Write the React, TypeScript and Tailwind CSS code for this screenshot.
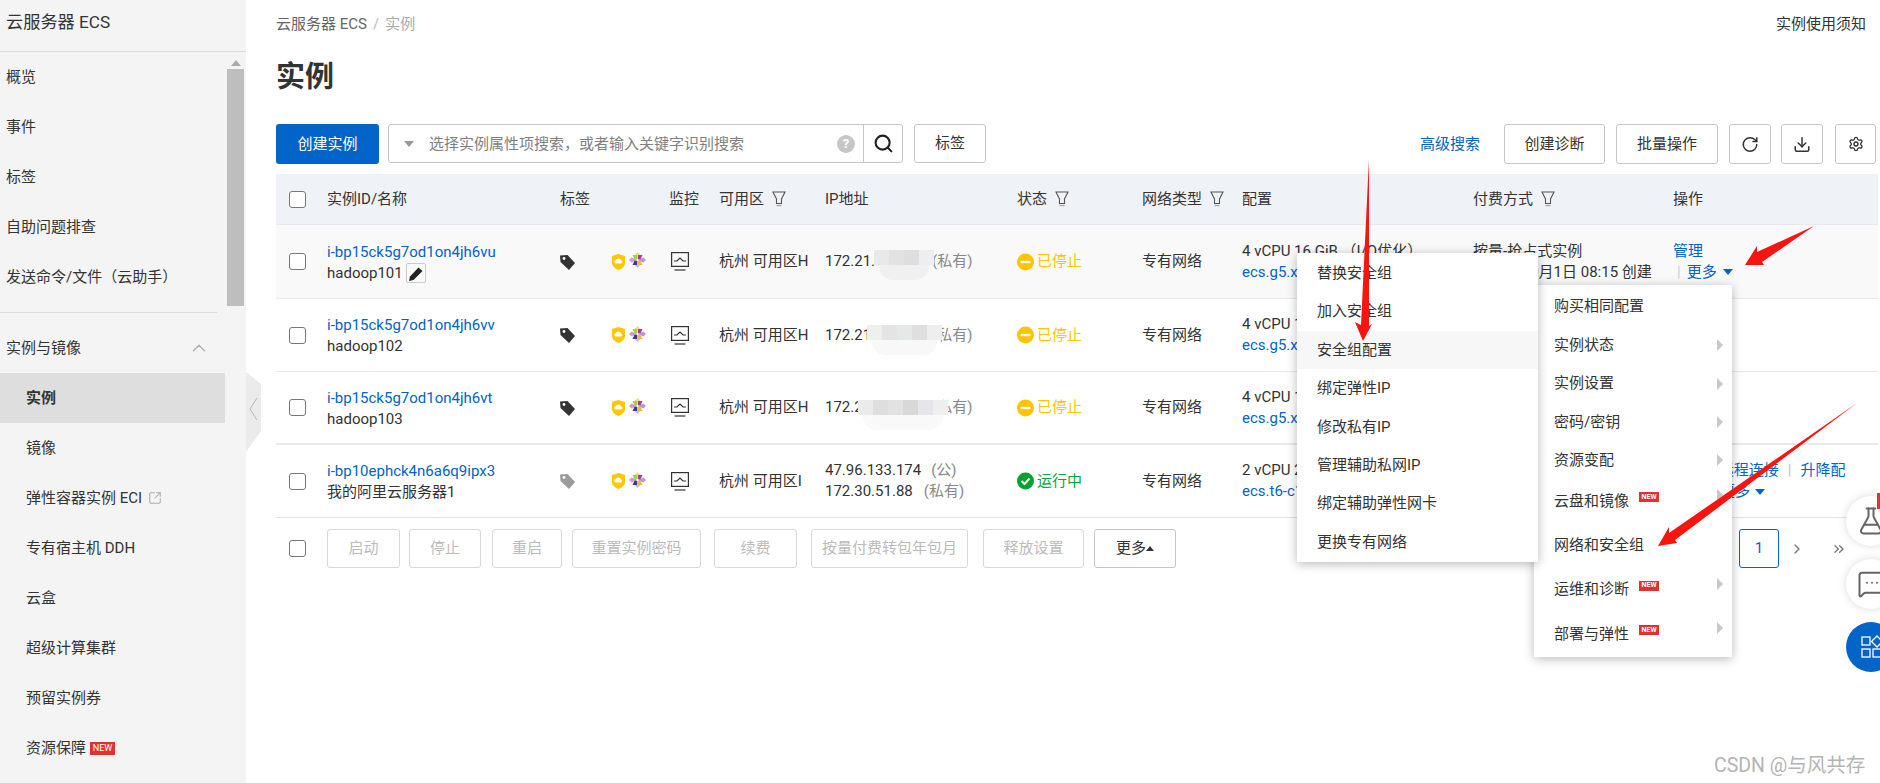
import {
  ChevronUp,
  ChevronRight,
  ChevronsRight,
  Search,
  RotateCw,
  Download,
  Settings,
  FlaskConical,
  MessageSquareMore,
  SquareArrowOutUpRight,
} from "lucide-react";

const topNav = ["概览", "事件", "标签", "自助问题排查", "发送命令/文件（云助手）"];
const subNav = ["实例", "镜像", "弹性容器实例 ECI", "专有宿主机 DDH", "云盒", "超级计算集群", "预留实例券", "资源保障"];

const securityMenu = ["替换安全组", "加入安全组", "安全组配置", "绑定弹性IP", "修改私有IP", "管理辅助私网IP", "绑定辅助弹性网卡", "更换专有网络"];
const moreMenu = [
  { label: "购买相同配置", h: "h-[40px]" },
  { label: "实例状态", arrow: true, h: "h-[38px]" },
  { label: "实例设置", arrow: true, h: "h-[39px]" },
  { label: "密码/密钥", arrow: true, h: "h-[38px]" },
  { label: "资源变配", arrow: true, h: "h-[38px]" },
  { label: "云盘和镜像", isNew: true, arrow: true, up: true, h: "h-[44px]" },
  { label: "网络和安全组", h: "h-[44px]" },
  { label: "运维和诊断", isNew: true, arrow: true, up: true, h: "h-[45px]" },
  { label: "部署与弹性", isNew: true, arrow: true, up: true, h: "h-[44px]" },
];

const footerButtons = [
  { label: "启动", w: "w-[73px]" },
  { label: "停止", w: "w-[72px] ml-[9px]" },
  { label: "重启", w: "w-[70px] ml-[11px]" },
  { label: "重置实例密码", w: "w-[129px] ml-[10px]" },
  { label: "续费", w: "w-[83px] ml-[13px]" },
  { label: "按量付费转包年包月", w: "w-[157px] ml-[14px]" },
  { label: "释放设置", w: "w-[101px] ml-[15px]" },
];

const rows = [
  {
    id: "i-bp15ck5g7od1on4jh6vu",
    name: "hadoop101",
    az: "杭州 可用区H",
    ip: "172.21.1",
    cfg: "4 vCPU 16 GiB （I/O优化）",
    type: "ecs.g5.xlarge",
    status: "stopped",
    h: "h-[74px]",
    bg: "bg-[#f9f9f9]",
    mosaic: { left: "left-[49px]", top: "top-[25px]", colors: ["#e9e9e9", "#e2e2e2", "#dedede", "#eeeef2"], low: "#f0f0f0" },
  },
  {
    id: "i-bp15ck5g7od1on4jh6vv",
    name: "hadoop102",
    az: "杭州 可用区H",
    ip: "172.21",
    cfg: "4 vCPU 16 GiB （I/O优化）",
    type: "ecs.g5.xlarge",
    status: "stopped",
    h: "h-[73px]",
    bg: "bg-white",
    mosaic: { left: "left-[42px]", top: "top-[26px]", colors: ["#efefef", "#e4e4e4", "#e6e8e8", "#dfdfdf", "#eeeeee"], low: "#f8f8f8" },
  },
  {
    id: "i-bp15ck5g7od1on4jh6vt",
    name: "hadoop103",
    az: "杭州 可用区H",
    ip: "172.2",
    cfg: "4 vCPU 16 GiB （I/O优化）",
    type: "ecs.g5.xlarge",
    status: "stopped",
    h: "h-[73px]",
    bg: "bg-white",
    mosaic: { left: "left-[33px]", top: "top-[28px]", colors: ["#ebebeb", "#dedede", "#e2e2e2", "#d8d8d8", "#e6e6ea", "#eeeeee"], low: "#f9f9f9" },
  },
  {
    id: "i-bp10ephck4n6a6q9ipx3",
    name: "我的阿里云服务器1",
    az: "杭州 可用区I",
    ip: "",
    cfg: "2 vCPU 2 GiB",
    type: "ecs.t6-c1m1.large",
    status: "running",
    h: "h-[73px]",
    bg: "bg-white",
    mosaic: null,
  },
];

const gridCols = "grid grid-cols-[51px_233px_109px_50px_106px_192px_125px_100px_231px_200px_1fr]";

function Checkbox() {
  return <span className="block w-[17px] h-[17px] rounded-[3px] border border-[#777] bg-white" />;
}

function FilterIcon() {
  return (
    <svg width="14" height="16" viewBox="0 0 14 16" className="ml-[8px] shrink-0" fill="none">
      <path d="M1 1h12L9.5 8v4.5h-5V8z" stroke="#555" strokeWidth="1.1" />
      <path d="M4.5 14.5h5" stroke="#aaa" strokeWidth="1.4" />
    </svg>
  );
}

function TagIcon({ color }: { color: string }) {
  return (
    <svg width="15" height="16" viewBox="0 0 15 16">
      <path d="M0 1.5 7.5 1 15 9l-6 7-8.500-8z" fill={color} />
      <circle cx="4" cy="4.500" r="1.400" fill="#fff" />
    </svg>
  );
}

function ShieldIcon() {
  return (
    <svg width="13" height="16" viewBox="0 0 13 16">
      <path d="M6.500 0 13 2v7c0 3.500-3.500 5.800-6.500 7C3.500 14.800 0 12.500 0 9V2z" fill="#ffc700" />
      <path d="M3.500 9.500a1.700 1.700 0 0 1 .2-3.300 2.800 2.800 0 0 1 5.300.2 1.600 1.600 0 0 1 0 3.100z" fill="#fff" />
    </svg>
  );
}

function CentosIcon() {
  return (
    <svg width="17" height="16" viewBox="0 0 17 16">
      <path d="M8.500 0 11 2.500 9 7H8L6 2.500z" fill="#e3dc8e" />
      <path d="M8.500 16 6 13.500 8 9h1l2 4.500z" fill="#cbb8dc" />
      <path d="M0 8 2.500 5.500 7.500 7.500v1L2.500 10.500z" fill="#d79ac8" />
      <path d="M17 8 14.500 5.500 9.500 7.500v1l5 2z" fill="#b49bd2" />
      <path d="M3.500 3H8v4.300H5.500z" fill="#a6d042" />
      <path d="M9 3h4.500l-2 4.300H9z" fill="#a93c8e" />
      <path d="M3.500 13H8V8.700H5.500z" fill="#3a3a94" />
      <path d="M9 13h4.500l-2-4.300H9z" fill="#f3b73a" />
    </svg>
  );
}

function MonitorIcon() {
  return (
    <svg width="18" height="19" viewBox="0 0 18 19" fill="none">
      <rect x="0.600" y="0.600" width="16.800" height="13.800" stroke="#333" strokeWidth="1.200" />
      <path d="M3 9h3l3-3 3 3h3" stroke="#333" strokeWidth="1.200" />
      <path d="M3.500 18h11" stroke="#333" strokeWidth="1.200" />
    </svg>
  );
}

function Mosaic({ m }: { m: NonNullable<(typeof rows)[number]["mosaic"]> }) {
  return (
    <div className={`absolute flex flex-col ${m.left} ${m.top}`}>
      <div className="flex">
        {m.colors.map((c, i) => (
          <span key={i} className="w-[15px] h-[15px]" style={{ backgroundColor: c }} />
        ))}
      </div>
      <div className="h-[15px] mx-[5px] rounded-b-[14px]" style={{ backgroundColor: m.low }} />
    </div>
  );
}

function NewBadge({ size }: { size: "lg" | "sm" }) {
  return (
    <span
      className={
        size === "lg"
          ? "inline-flex items-center justify-center w-[25px] h-[13px] bg-[#e0322f] text-white text-[9px] leading-none"
          : "inline-flex items-center justify-center w-[20px] h-[10px] bg-[#e0322f] text-white text-[7px] font-bold leading-none"
      }
    >
      NEW
    </span>
  );
}

function StatusCell({ status }: { status: string }) {
  if (status === "running") {
    return (
      <div className="flex items-center gap-[3px] text-[#00a73c]">
        <svg width="17" height="18" viewBox="0 0 17 18">
          <circle cx="8.500" cy="9" r="8.500" fill="#00a32e" />
          <path d="M4.500 9 7.500 12 12.500 6.500" stroke="#fff" strokeWidth="2" fill="none" />
        </svg>
        运行中
      </div>
    );
  }
  return (
    <div className="flex items-center gap-[3px] text-[#fdc500]">
      <svg width="17" height="18" viewBox="0 0 17 18">
        <circle cx="8.500" cy="9" r="8.500" fill="#ffc400" />
        <rect x="3.500" y="7.800" width="10" height="2.400" fill="#fff" />
      </svg>
      已停止
    </div>
  );
}

export default function App() {
  return (
    <div className="relative flex w-[1880px] h-[783px] overflow-hidden bg-white text-[#333] text-[15px] font-['Roboto','Noto_Sans_CJK_SC',sans-serif]">
      {/* sidebar */}
      <aside className="w-[246px] shrink-0 flex flex-col bg-[#f4f4f4]">
        <div className="h-[52px] shrink-0 flex items-center pl-[6px] text-[17.200px] border-b border-[#dcdcdc] pb-[5px]">
          云服务器 ECS
        </div>
        <div className="flex flex-1 min-h-0">
          <nav className="w-[225px] shrink-0 overflow-hidden">
            {topNav.map((t) => (
              <div key={t} className="h-[50px] flex items-center pl-[6px] whitespace-nowrap">
                {t}
              </div>
            ))}
            <div className="mt-[10px] mr-[8px] border-t border-[#dcdcdc]" />
            <div className="mt-[10px] h-[50px] flex items-center justify-between pl-[6px] pr-[13px]">
              实例与镜像
              <ChevronUp className="w-[26px] h-[22px] text-[#aaa]" strokeWidth={1.300} />
            </div>
            {subNav.map((t) => (
              <div
                key={t}
                className={`h-[50px] flex items-center pl-[26px] whitespace-nowrap ${t === "实例" ? "bg-[#dedede] font-bold" : ""}`}
              >
                {t}
                {t === "弹性容器实例 ECI" && (
                  <SquareArrowOutUpRight className="ml-[6px] w-[14px] h-[14px] text-[#aaa]" strokeWidth={1.800} />
                )}
                {t === "资源保障" && (
                  <span className="ml-[4px] flex">
                    <NewBadge size="lg" />
                  </span>
                )}
              </div>
            ))}
          </nav>
          <div className="flex-1 flex flex-col items-center">
            <span className="mt-[8px] mb-[3px] w-0 h-0 border-x-[5px] border-x-transparent border-b-[6px] border-b-[#aaa]" />
            <div className="w-[17px] h-[237px] bg-[#bebebe]" />
          </div>
        </div>
      </aside>

      {/* collapse handle */}
      <svg width="15" height="80" viewBox="0 0 15 80" className="absolute left-[246px] top-[372px]">
        <path d="M0 0 15 12v47L0 80z" fill="#ebebeb" />
        <path d="M11 26 4 37l7 11" stroke="#b5b5b5" strokeWidth="1" fill="none" />
      </svg>

      {/* main */}
      <main className="flex-1 min-w-0 pl-[30px] pr-[2px]">
        <div className="h-[48px] flex items-center justify-between pr-[12px]">
          <div className="flex items-center">
            <span className="text-[#666]">云服务器 ECS</span>
            <span className="mx-[6px] text-[#bbb]">/</span>
            <span className="text-[#aaa]">实例</span>
          </div>
          <span>实例使用须知</span>
        </div>
        <h1 className="h-[54px] pt-[6px] flex items-center text-[29px] font-bold mb-[22px]">实例</h1>

        <div className="h-[40px] flex items-stretch mb-[10px] pr-[2px]">
          <button className="w-[103px] rounded-[3px] bg-[#0064c8] text-white">创建实例</button>
          <div className="ml-[9px] w-[476px] h-[39px] flex items-center rounded-l-[3px] border border-[#c4c6cc] pl-[15px] pr-[8px]">
            <span className="w-0 h-0 border-x-[5px] border-x-transparent border-t-[6px] border-t-[#999]" />
            <span className="ml-[15px] flex-1 text-[#808080] pt-[1px]">选择实例属性项搜索，或者输入关键字识别搜索</span>
            <span className="w-[18px] h-[18px] rounded-full bg-[#c6c6c6] text-white font-bold text-[13px] flex items-center justify-center">
              ?
            </span>
          </div>
          <div className="w-[40px] h-[39px] -ml-px flex items-center justify-center rounded-r-[3px] border border-[#c4c6cc]">
            <Search className="w-[21px] h-[21px] text-[#222]" strokeWidth={2.400} />
          </div>
          <button className="ml-[11px] w-[72px] h-[39px] rounded-[3px] border border-[#c4c6cc]">标签</button>
          <div className="flex-1" />
          <span className="self-center text-[#0064c8] mr-[24px]">高级搜索</span>
          <button className="w-[101px] rounded-[3px] border border-[#c4c6cc]">创建诊断</button>
          <button className="ml-[11px] w-[102px] rounded-[3px] border border-[#c4c6cc]">批量操作</button>
          <button className="ml-[11px] w-[42px] rounded-[3px] border border-[#c4c6cc] flex items-center justify-center">
            <RotateCw className="w-[18px] h-[21px]" strokeWidth={2} />
          </button>
          <button className="ml-[10px] w-[42px] rounded-[3px] border border-[#c4c6cc] flex items-center justify-center">
            <Download className="w-[18px] h-[21px]" strokeWidth={2} />
          </button>
          <button className="ml-[12px] w-[41px] rounded-[3px] border border-[#c4c6cc] flex items-center justify-center">
            <Settings className="w-[16px] h-[18px]" strokeWidth={2} />
          </button>
        </div>

        {/* table head */}
        <div className={`${gridCols} h-[51px] items-center bg-[#eff2f6] border-b border-[#e5e8ec]`}>
          <div className="pl-[13px]">
            <Checkbox />
          </div>
          <div>实例ID/名称</div>
          <div>标签</div>
          <div>监控</div>
          <div className="flex items-center">可用区<FilterIcon /></div>
          <div>IP地址</div>
          <div className="flex items-center">状态<FilterIcon /></div>
          <div className="flex items-center whitespace-nowrap">网络类型<FilterIcon /></div>
          <div>配置</div>
          <div className="flex items-center">付费方式<FilterIcon /></div>
          <div>操作</div>
        </div>

        {/* table rows */}
        {rows.map((r, i) => (
          <div
            key={r.id}
            className={`${gridCols} ${r.h} ${r.bg} items-center leading-[21px] ${i === 2 ? "border-b-2" : "border-b"} ${i === 3 ? "border-[#dfe2e6]" : "border-[#e6e9ed]"}`}
          >
            <div className="pl-[13px]">
              <Checkbox />
            </div>
            <div className="pt-[2px]">
              <div className="text-[#0064c8] whitespace-nowrap">{r.id}</div>
              <div className="flex items-center">
                {r.name}
                {i === 0 && (
                  <span className="ml-[3px] w-[20px] h-[20px] flex items-center justify-center rounded-[2px] border border-[#ccc]">
                    <svg width="14" height="15" viewBox="0 0 14 15">
                      <path d="M0 15 1 10.500 9.500 1.500 13.500 5 4.500 14z" fill="#222" />
                    </svg>
                  </span>
                )}
              </div>
            </div>
            <div className="flex items-center">
              <TagIcon color={i === 3 ? "#9b9b9b" : "#333"} />
              <span className="ml-[37px] flex">
                <ShieldIcon />
              </span>
              <span className="ml-[4px] -mt-[3px] flex">
                <CentosIcon />
              </span>
            </div>
            <div className="pl-[2px] flex">
              <MonitorIcon />
            </div>
            <div className="whitespace-nowrap">{r.az}</div>
            <div className="relative self-stretch flex flex-col justify-center whitespace-nowrap">
              {i === 3 ? (
                <>
                  <div>
                    47.96.133.174<span className="ml-[10px] text-[#888]">(公)</span>
                  </div>
                  <div>
                    172.30.51.88<span className="ml-[11px] text-[#888]">(私有)</span>
                  </div>
                </>
              ) : (
                <div className="flex">
                  <span className="w-[107px]">{r.ip}</span>
                  <span className="text-[#888]">(私有)</span>
                </div>
              )}
              {r.mosaic && <Mosaic m={r.mosaic} />}
            </div>
            <StatusCell status={r.status} />
            <div>专有网络</div>
            <div className="whitespace-nowrap">
              <div>{r.cfg}</div>
              <div className="text-[#0064c8]">{r.type}</div>
            </div>
            <div className="whitespace-nowrap">
              {i === 0 && (
                <>
                  <div>按量-抢占式实例</div>
                  <div>2021年10月1日 08:15 创建</div>
                </>
              )}
            </div>
            <div className="text-[#0064c8] whitespace-nowrap">
              {i === 3 && (
                <>
                  <div className="flex items-center">
                    管理<span className="mx-[6px] text-[#ccc]">|</span>远程连接<span className="mx-[9px] text-[#bbb]">|</span>升降配
                  </div>
                  <div className="flex items-center pl-[47px]">
                    更多
                    <span className="ml-[5px] w-0 h-0 border-x-[5px] border-x-transparent border-t-[6px] border-t-[#0064c8]" />
                  </div>
                </>
              )}
              {i === 0 && (
                <>
                  <div>管理</div>
                  <div className="flex items-center">
                    <span className="ml-[4px] mr-[6px] text-[#ccc]">|</span>更多
                    <span className="ml-[6px] w-0 h-0 border-x-[5px] border-x-transparent border-t-[6px] border-t-[#0064c8]" />
                  </div>
                </>
              )}
            </div>
          </div>
        ))}

        {/* footer */}
        <div className="flex items-center h-[39px] mt-[11px] pl-[13px] border-[#ddd]">
          <Checkbox />
          <div className="ml-[21px] flex items-stretch h-[39px]">
            {footerButtons.map((b) => (
              <button key={b.label} className={`${b.w} rounded-[3px] border border-[#d8d8d8] text-[#bbb]`}>
                {b.label}
              </button>
            ))}
            <button className="ml-[10px] w-[82px] rounded-[3px] border border-[#c4c6cc] flex items-center justify-center">
              更多
              <span className="w-0 h-0 border-x-[4px] border-x-transparent border-b-[5px] border-b-[#333]" />
            </button>
          </div>
          <div className="flex-1" />
          <div className="w-[40px] h-[39px] rounded-[3px] border border-[#0064c8] text-[#0064c8] flex items-center justify-center">
            1
          </div>
          <ChevronRight className="ml-[10px] w-[16px] h-[16px] text-[#777]" />
          <ChevronsRight className="ml-[26px] w-[16px] h-[16px] text-[#777] mr-[31px]" />
        </div>
      </main>

      {/* security group submenu */}
      <div className="absolute z-20 left-[1297px] top-[253px] w-[241px] bg-white py-[1px] shadow-[0_2px_10px_rgba(0,0,0,0.28)]">
        {securityMenu.map((t) => (
          <div
            key={t}
            className={`h-[38.400px] flex items-center pl-[20px] ${t === "安全组配置" ? "bg-[#f7f7f7]" : ""}`}
          >
            {t}
          </div>
        ))}
      </div>

      {/* more menu */}
      <div className="absolute z-10 left-[1534px] top-[285px] w-[198px] bg-white py-[1px] shadow-[0_2px_10px_rgba(0,0,0,0.28)]">
        {moreMenu.map((m) => (
          <div key={m.label} className={`${m.h} flex items-center pl-[20px] pr-[9px]`}>
            <span>{m.label}</span>
            {m.isNew && (
              <span className="ml-[10px] -mt-[8px] flex">
                <NewBadge size="sm" />
              </span>
            )}
            <span className="flex-1" />
            {m.arrow && (
              <span
                className={`w-0 h-0 border-y-[6px] border-y-transparent border-l-[6px] border-l-[#c8c8c8] ${m.up ? "-mt-[12px]" : ""}`}
              />
            )}
          </div>
        ))}
      </div>

      {/* floating tools */}
      <div className="absolute z-10 left-[1846px] top-[496px] flex flex-col gap-[13px]">
        <div className="w-[50px] h-[50px] rounded-full bg-white shadow-[0_0_8px_rgba(0,0,0,0.15)] flex items-center pl-[10px]">
          <FlaskConical className="w-[30px] h-[30px] shrink-0 text-[#666]" strokeWidth={1.600} />
        </div>
        <div className="w-[50px] h-[50px] rounded-full bg-white shadow-[0_0_8px_rgba(0,0,0,0.15)] flex items-center pl-[11px]">
          <MessageSquareMore className="w-[30px] h-[30px] shrink-0 text-[#666]" strokeWidth={1.600} />
        </div>
        <div className="w-[50px] h-[50px] rounded-full bg-[#0064c8] flex items-center pl-[15px]">
          <svg width="28" height="24" viewBox="0 0 28 24" fill="none" stroke="#fff" strokeWidth="1.300" className="shrink-0">
            <rect x="1" y="2" width="8" height="8" />
            <rect x="1" y="14" width="8" height="8" />
            <rect x="12" y="14" width="8" height="8" />
            <path d="M16 1l5.500 5.500L16 12l-5.500-5.500z" />
          </svg>
        </div>
      </div>
      <span className="absolute z-10 left-[1877px] top-[493px] w-[3px] h-[16px] bg-[#e0322f]" />

      {/* red annotation arrows */}
      <svg width="1880" height="783" viewBox="0 0 1880 783" className="absolute left-0 top-0 z-30 pointer-events-none">
        <polygon points="1369,159 1369,326 1372,324 1363,341 1355,322 1361,325" fill="#f8140f" />
        <polygon points="1814,226 1762,262 1764,265 1745,265 1757,246 1757,252" fill="#f8140f" />
        <polygon points="1857,403 1675,540 1677,543 1658,546 1669,527 1669,533" fill="#f8140f" />
      </svg>

      <span className="absolute z-30 left-[1714px] top-[751px] text-[19.500px] text-[#b4b4b4] whitespace-nowrap">
        CSDN @与风共存
      </span>
    </div>
  );
}
